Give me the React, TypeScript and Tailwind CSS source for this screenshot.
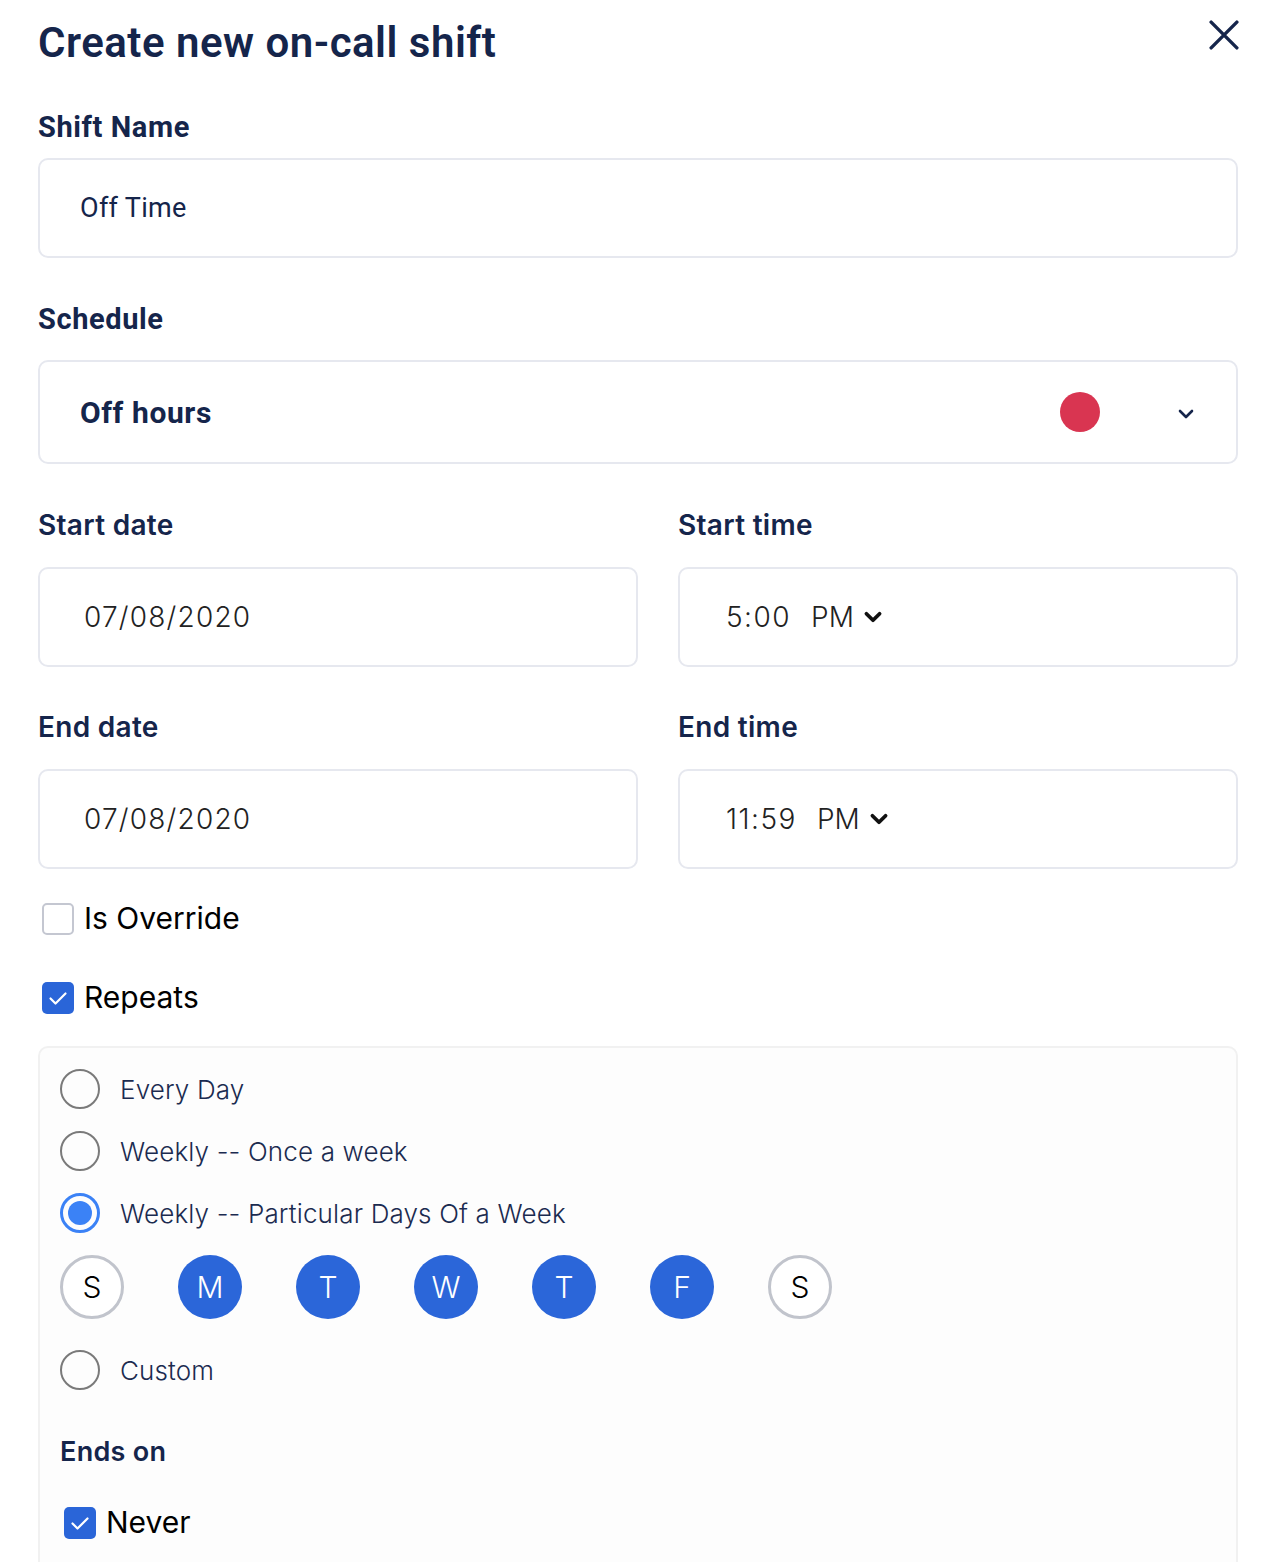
import React from "react";

const navy = "text-[#15254b]";

function Check() {
  return (
    <svg viewBox="0 0 32 32" className="w-[32px] h-[32px]">
      <path d="M8.5 16.5 L13.5 21.5 L23.5 11.5" fill="none" stroke="white" strokeWidth="2.2" strokeLinecap="round" strokeLinejoin="round" />
    </svg>
  );
}

function CheckBox({ checked }: { checked: boolean }) {
  return checked ? (
    <span className="w-[32px] h-[32px] rounded-[5px] bg-[#2a65d8] flex items-center justify-center shrink-0">
      <Check />
    </span>
  ) : (
    <span className="w-[32px] h-[32px] rounded-[5px] border-2 border-[#c4c7d1] bg-white shrink-0" />
  );
}

function Radio({ checked, label }: { checked?: boolean; label: string }) {
  return (
    <div className="flex items-center h-[40px]">
      {checked ? (
        <span className="w-[40px] h-[40px] rounded-full border-[3px] border-[#3b82f6] flex items-center justify-center shrink-0">
          <span className="w-[24px] h-[24px] rounded-full bg-[#3b82f6]" />
        </span>
      ) : (
        <span className="w-[40px] h-[40px] rounded-full border-2 border-[#7a7a7a] shrink-0" />
      )}
      <span className="ml-[20px] text-[26px] font-light text-[#1b2b50] font-['Inter',sans-serif] tracking-[0.15px]">{label}</span>
    </div>
  );
}

function Label({ children, className = "" }: { children: React.ReactNode; className?: string }) {
  return (
    <div className={`text-[28px] leading-[36px] font-semibold ${navy} font-['Inter',sans-serif] tracking-[0.3px] ${className}`}>{children}</div>
  );
}

function Box({ children, className = "" }: { children: React.ReactNode; className?: string }) {
  return (
    <div className={`h-[100px] border-2 border-[#e6e8ef] rounded-[10px] flex items-center bg-white ${className}`}>{children}</div>
  );
}

function TimeBox({ time }: { time: string }) {
  return (
    <Box className="pl-[46px]">
      <span className="text-[28px] text-[#222] font-['Inter',sans-serif] font-light tracking-[1.5px]">{time}</span>
      <span className="ml-[20px] text-[28px] text-[#222] font-['Inter',sans-serif] font-light">PM</span>
      <svg viewBox="0 0 20 20" className="ml-[8px] w-[22px] h-[22px]">
        <path d="M4 7 L10 13 L16 7" fill="none" stroke="#111" strokeWidth="3.4" strokeLinecap="round" strokeLinejoin="round" />
      </svg>
    </Box>
  );
}

function Day({ l, on }: { l: string; on?: boolean }) {
  return on ? (
    <span className="w-[64px] h-[64px] rounded-full bg-[#2b66d9] flex items-center justify-center text-white text-[30px] font-light font-['Inter',sans-serif]">{l}</span>
  ) : (
    <span className="w-[64px] h-[64px] rounded-full border-[3px] border-[#c1c4cc] bg-white flex items-center justify-center text-black text-[30px] font-light font-['Inter',sans-serif]">{l}</span>
  );
}

export default function App() {
  return (
    <div className="w-[1282px] h-[1562px] overflow-hidden bg-white pl-[38px] pr-[44px]">
      <div className="flex items-start justify-between pt-[17px]">
        <h1 className={`text-[42px] leading-[52px] font-semibold ${navy} font-['Roboto',sans-serif] tracking-[0.5px]`}>Create new on-call shift</h1>
        <svg viewBox="0 0 28 28" className="w-[30px] h-[30px] mt-[3px] mr-[-1px]">
          <path d="M2 2 L26 26 M26 2 L2 26" stroke="#15254b" strokeWidth="3.2" strokeLinecap="round" />
        </svg>
      </div>

      <div className={`mt-[40px] text-[29px] leading-[36px] font-bold ${navy} font-['Roboto',sans-serif] tracking-[0.6px]`}>Shift Name</div>
      <Box className="mt-[13px] pl-[40px]">
        <span className={`text-[27px] ${navy} font-['Roboto',sans-serif] tracking-[0.3px]`}>Off Time</span>
      </Box>

      <div className={`mt-[43px] text-[29px] leading-[36px] font-bold ${navy} font-['Roboto',sans-serif] tracking-[0.6px]`}>Schedule</div>
      <div className="mt-[23px] h-[104px] border-2 border-[#e6e8ef] rounded-[10px] flex items-center pl-[40px] pr-[40px]">
        <span className={`text-[30px] font-bold ${navy} font-['Roboto',sans-serif] tracking-[0.6px] flex-1`}>Off hours</span>
        <span className="w-[40px] h-[40px] rounded-full bg-[#d93551] ml-[2px]" />
        <svg viewBox="0 0 20 20" className="ml-[76px] w-[20px] h-[20px] mt-[4px]">
          <path d="M4 7 L10 13 L16 7" fill="none" stroke="#15254b" strokeWidth="2.6" strokeLinecap="round" strokeLinejoin="round" />
        </svg>
      </div>

      <div className="grid grid-cols-[600px_560px] gap-x-[40px] mt-[43px]">
        <Label>Start date</Label>
        <Label>Start time</Label>
        <Box className="mt-[24px] pl-[44px]">
          <span className="text-[28px] text-[#222] font-['Inter',sans-serif] font-light tracking-[1.2px]">07/08/2020</span>
        </Box>
        <div className="mt-[24px]"><TimeBox time="5:00" /></div>
        <Label className="mt-[42px]">End date</Label>
        <Label className="mt-[42px]">End time</Label>
        <Box className="mt-[24px] pl-[44px]">
          <span className="text-[28px] text-[#222] font-['Inter',sans-serif] font-light tracking-[1.2px]">07/08/2020</span>
        </Box>
        <div className="mt-[24px]"><TimeBox time="11:59" /></div>
      </div>

      <div className="flex items-center mt-[27px] ml-[4px]">
        <CheckBox checked={false} />
        <span className="ml-[10px] text-[30px] text-black font-['Inter',sans-serif] font-normal">Is Override</span>
      </div>
      <div className="flex items-center mt-[34px] ml-[4px]">
        <CheckBox checked />
        <span className="ml-[10px] text-[30px] text-black font-['Inter',sans-serif] font-normal">Repeats</span>
      </div>

      <div className="mt-[26px] border-2 border-[#f1f1f1] rounded-[10px] bg-[#fdfdfd] pl-[20px] pt-[21px] h-[600px]">
        <div className="flex flex-col gap-[22px]">
          <Radio label="Every Day" />
          <Radio label="Weekly -- Once a week" />
          <Radio checked label="Weekly -- Particular Days Of a Week" />
        </div>
        <div className="flex gap-[54px] mt-[22px]">
          <Day l="S" />
          <Day l="M" on />
          <Day l="T" on />
          <Day l="W" on />
          <Day l="T" on />
          <Day l="F" on />
          <Day l="S" />
        </div>
        <div className="mt-[31px]">
          <Radio label="Custom" />
        </div>
        <div className={`mt-[44px] text-[27px] leading-[36px] font-semibold ${navy} font-['Inter',sans-serif] tracking-[0.3px]`}>Ends on</div>
        <div className="flex items-center mt-[30px] ml-[4px]">
          <CheckBox checked />
          <span className="ml-[10px] text-[30px] text-black font-['Inter',sans-serif] font-normal">Never</span>
        </div>
      </div>
    </div>
  );
}
